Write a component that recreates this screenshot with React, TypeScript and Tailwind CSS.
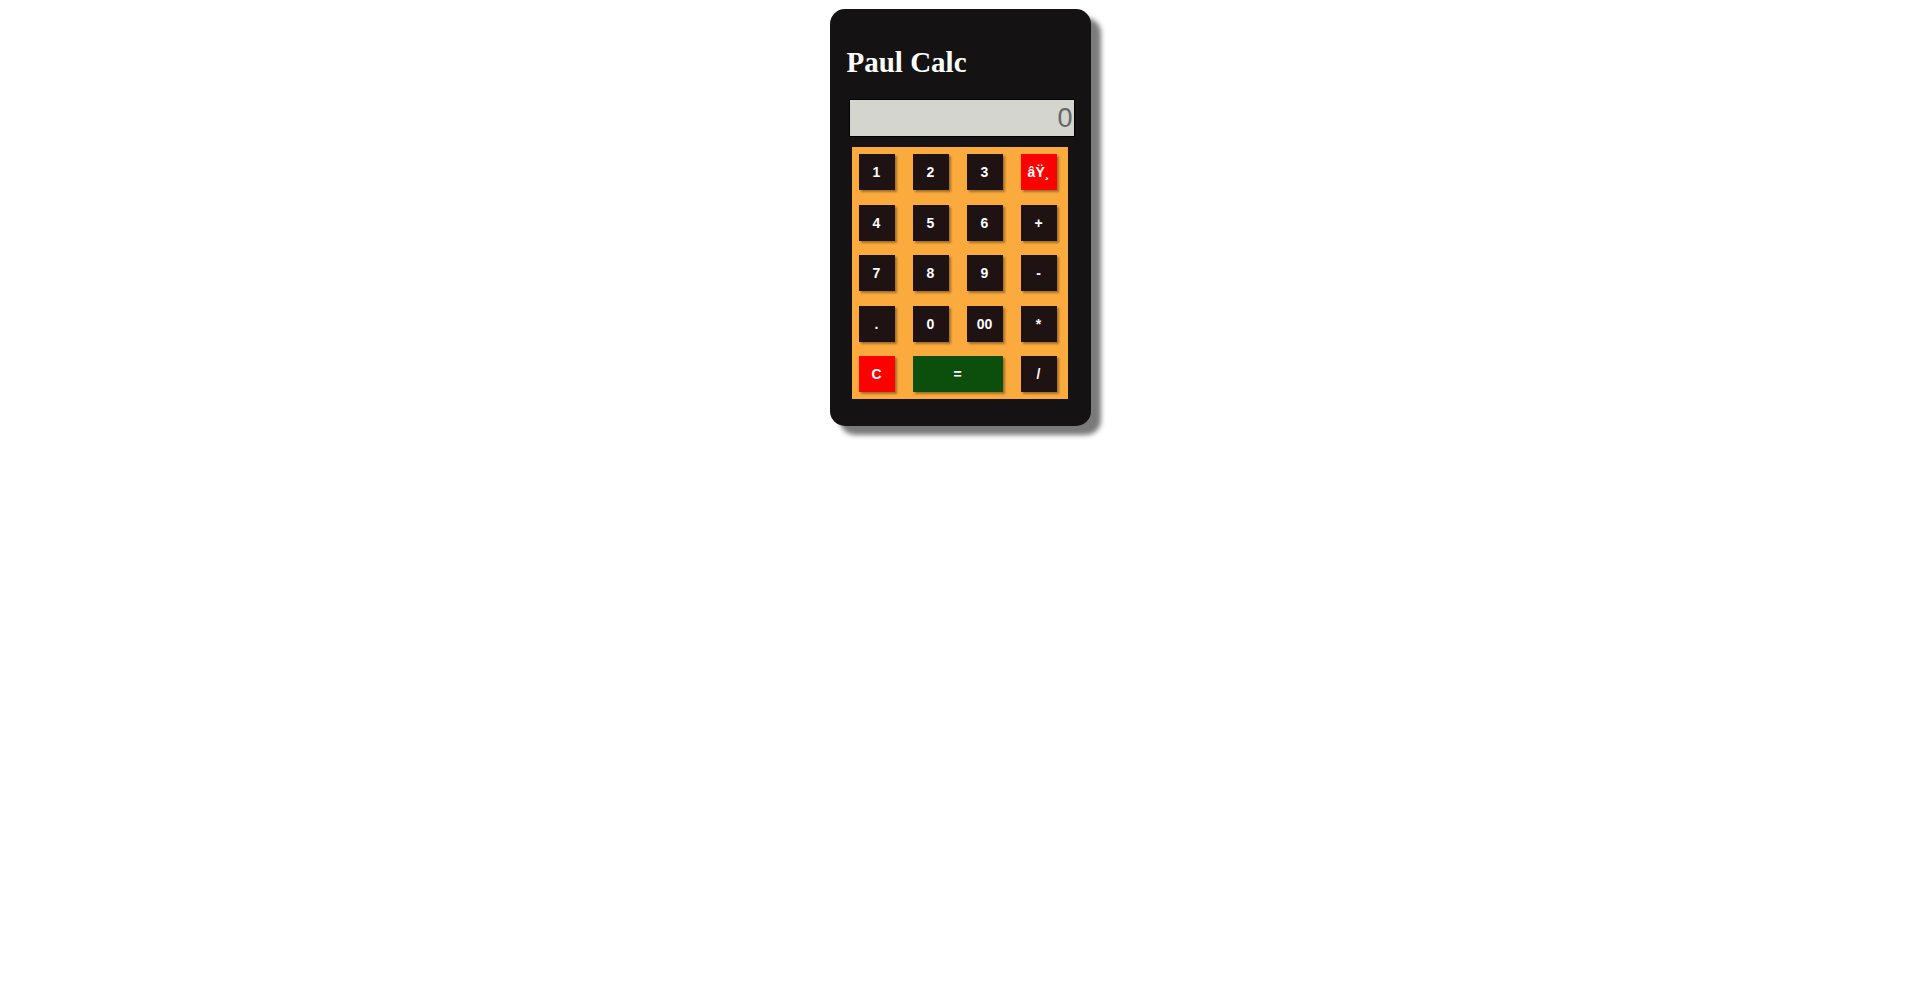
const keys = [
  { label: '1' },
  { label: '2' },
  { label: '3' },
  { label: 'âŸ¸', tone: 'red' },
  { label: '4' },
  { label: '5' },
  { label: '6' },
  { label: '+' },
  { label: '7' },
  { label: '8' },
  { label: '9' },
  { label: '-' },
  { label: '.' },
  { label: '0' },
  { label: '00' },
  { label: '*' },
  { label: 'C', tone: 'red' },
  { label: '=', tone: 'green', wide: true },
  { label: '/' },
];

const App = () => {
  return (
    <div className="min-h-screen w-full bg-white pt-[9px]">
      <div className="mx-auto h-[417px] w-[261px] rounded-[15px] bg-[#141213] shadow-[10px_9px_5px_#7a7a7a]">
        {/* Title */}
        <h1 className="ml-[17px] pt-[37px] text-[29px] font-bold leading-[32px] text-white [font-family:'Liberation_Serif',serif]">
          Paul Calc
        </h1>

        {/* Display */}
        <div className="ml-[19px] mt-[21px] flex h-[38px] w-[226px] items-center justify-end border border-black bg-[#d4d5cf] pr-[1px] text-[27px] text-[#666] [font-family:'Liberation_Sans',sans-serif]">
          0
        </div>

        {/* Keypad */}
        <div className="ml-[22px] mt-[10px] grid h-[252px] w-[216px] grid-cols-[repeat(4,36px)] grid-rows-[repeat(5,36px)] gap-x-[18px] gap-y-[14.5px] bg-[#fbab3d] pl-[7px] pt-[7px]">
          {keys.map((k, idx) => (
            <button
              key={idx}
              className={
                'flex items-center justify-center pt-[1px] text-[14px] font-black text-white shadow-[2px_2px_2px_rgba(0,0,0,0.35)] [font-family:\'Liberation_Sans\',sans-serif] ' +
                (k.tone === 'red'
                  ? 'bg-[#fe0000]'
                  : k.tone === 'green'
                    ? 'bg-[#0c4f0c]'
                    : 'bg-[#1e1213]') +
                (k.wide ? ' col-span-2' : '')
              }
            >
              {k.label}
            </button>
          ))}
        </div>
      </div>
    </div>
  );
};

export default App;
